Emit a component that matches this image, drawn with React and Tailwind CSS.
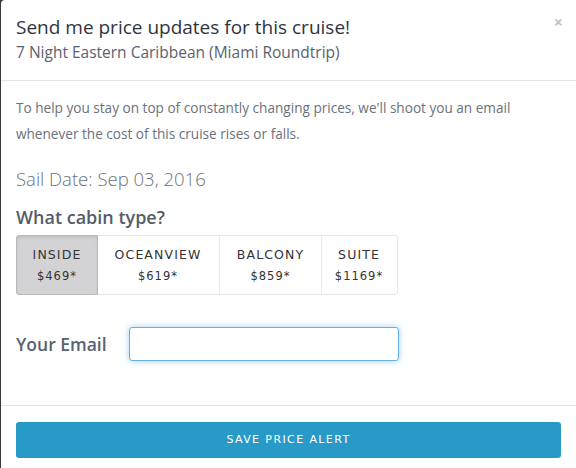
import React from "react";

const cabins = [
  { name: "INSIDE", price: "$469*", w: "w-[82px]", active: true },
  { name: "OCEANVIEW", price: "$619*", w: "w-[122px]" },
  { name: "BALCONY", price: "$859*", w: "w-[102px]" },
  { name: "SUITE", price: "$1169*", w: "w-[75px]" },
];

export default function App() {
  return (
    <div className="w-[576px] h-[468px] bg-[#3a3a3a] overflow-hidden">
      <div className="ml-px h-full bg-white rounded-tl-[4px] flex flex-col font-['Open_Sans',sans-serif]">
        <div className="relative h-[81px] border-b border-[#e5e5e5] px-[15px] pt-[14px]">
          <div className="text-[19px] leading-[26px] font-medium text-[#2f3541]">Send me price updates for this cruise!</div>
          <div className="text-[15.5px] leading-[20px] mt-[2px] text-[#5b6270]">7 Night Eastern Caribbean (Miami Roundtrip)</div>
          <div className="absolute right-[13px] top-[12px] text-[#c3c3c3] text-[16px] leading-[20px] font-bold">×</div>
        </div>
        <div className="px-[15px] pt-[14px] flex-1 border-b border-[#e5e5e5]">
          <p className="text-[13.6px] leading-[26px] text-[#6a717d]">
            To help you stay on top of constantly changing prices, we'll shoot you an email whenever the cost of this cruise rises or falls.
          </p>
          <div className="mt-[19px] text-[18.5px] leading-[26px] font-light text-[#6b7280]">Sail Date: Sep 03, 2016</div>
          <div className="mt-[13px] text-[18px] leading-[24px] font-semibold text-[#555c69]">What cabin type?</div>
          <div className="mt-[6px] flex h-[60px] w-[382px] border border-[#e6e6e6] rounded-[3px] font-['DejaVu_Sans',sans-serif] text-[#333]">
            {cabins.map((c, i) => (
              <div
                key={c.name}
                className={
                  c.active
                    ? `${c.w} -m-px h-[60px] flex flex-col items-center justify-center bg-[#d3d3d5] border border-[#b9b9bb] rounded-l-[3px] shadow-[inset_0_2px_3px_rgba(0,0,0,0.08)]`
                    : `${c.w} h-full flex flex-col items-center justify-center ${i > 1 ? "border-l border-[#eaeaea]" : ""}`
                }
              >
                <div className="text-[12.5px] tracking-[1.1px] leading-[16px]">{c.name}</div>
                <div className="text-[11.5px] tracking-[1px] leading-[16px] mt-[5px]">{c.price}</div>
              </div>
            ))}
          </div>
          <div className="mt-[32px] flex items-center">
            <div className="w-[113px] text-[17.5px] font-semibold text-[#5a6170]">Your Email</div>
            <input className="w-[270px] h-[34px] border border-[#66afe9] rounded-[3px] outline-none shadow-[0_0_6px_rgba(102,175,233,0.6)]" />
          </div>
        </div>
        <div className="h-[62px] px-[15px] pt-[16px]">
          <button className="w-[545px] h-[36px] bg-[#279ac8] rounded-[3px] text-white text-[11px] tracking-[1.4px] font-['DejaVu_Sans',sans-serif]">
            SAVE PRICE ALERT
          </button>
        </div>
      </div>
    </div>
  );
}
